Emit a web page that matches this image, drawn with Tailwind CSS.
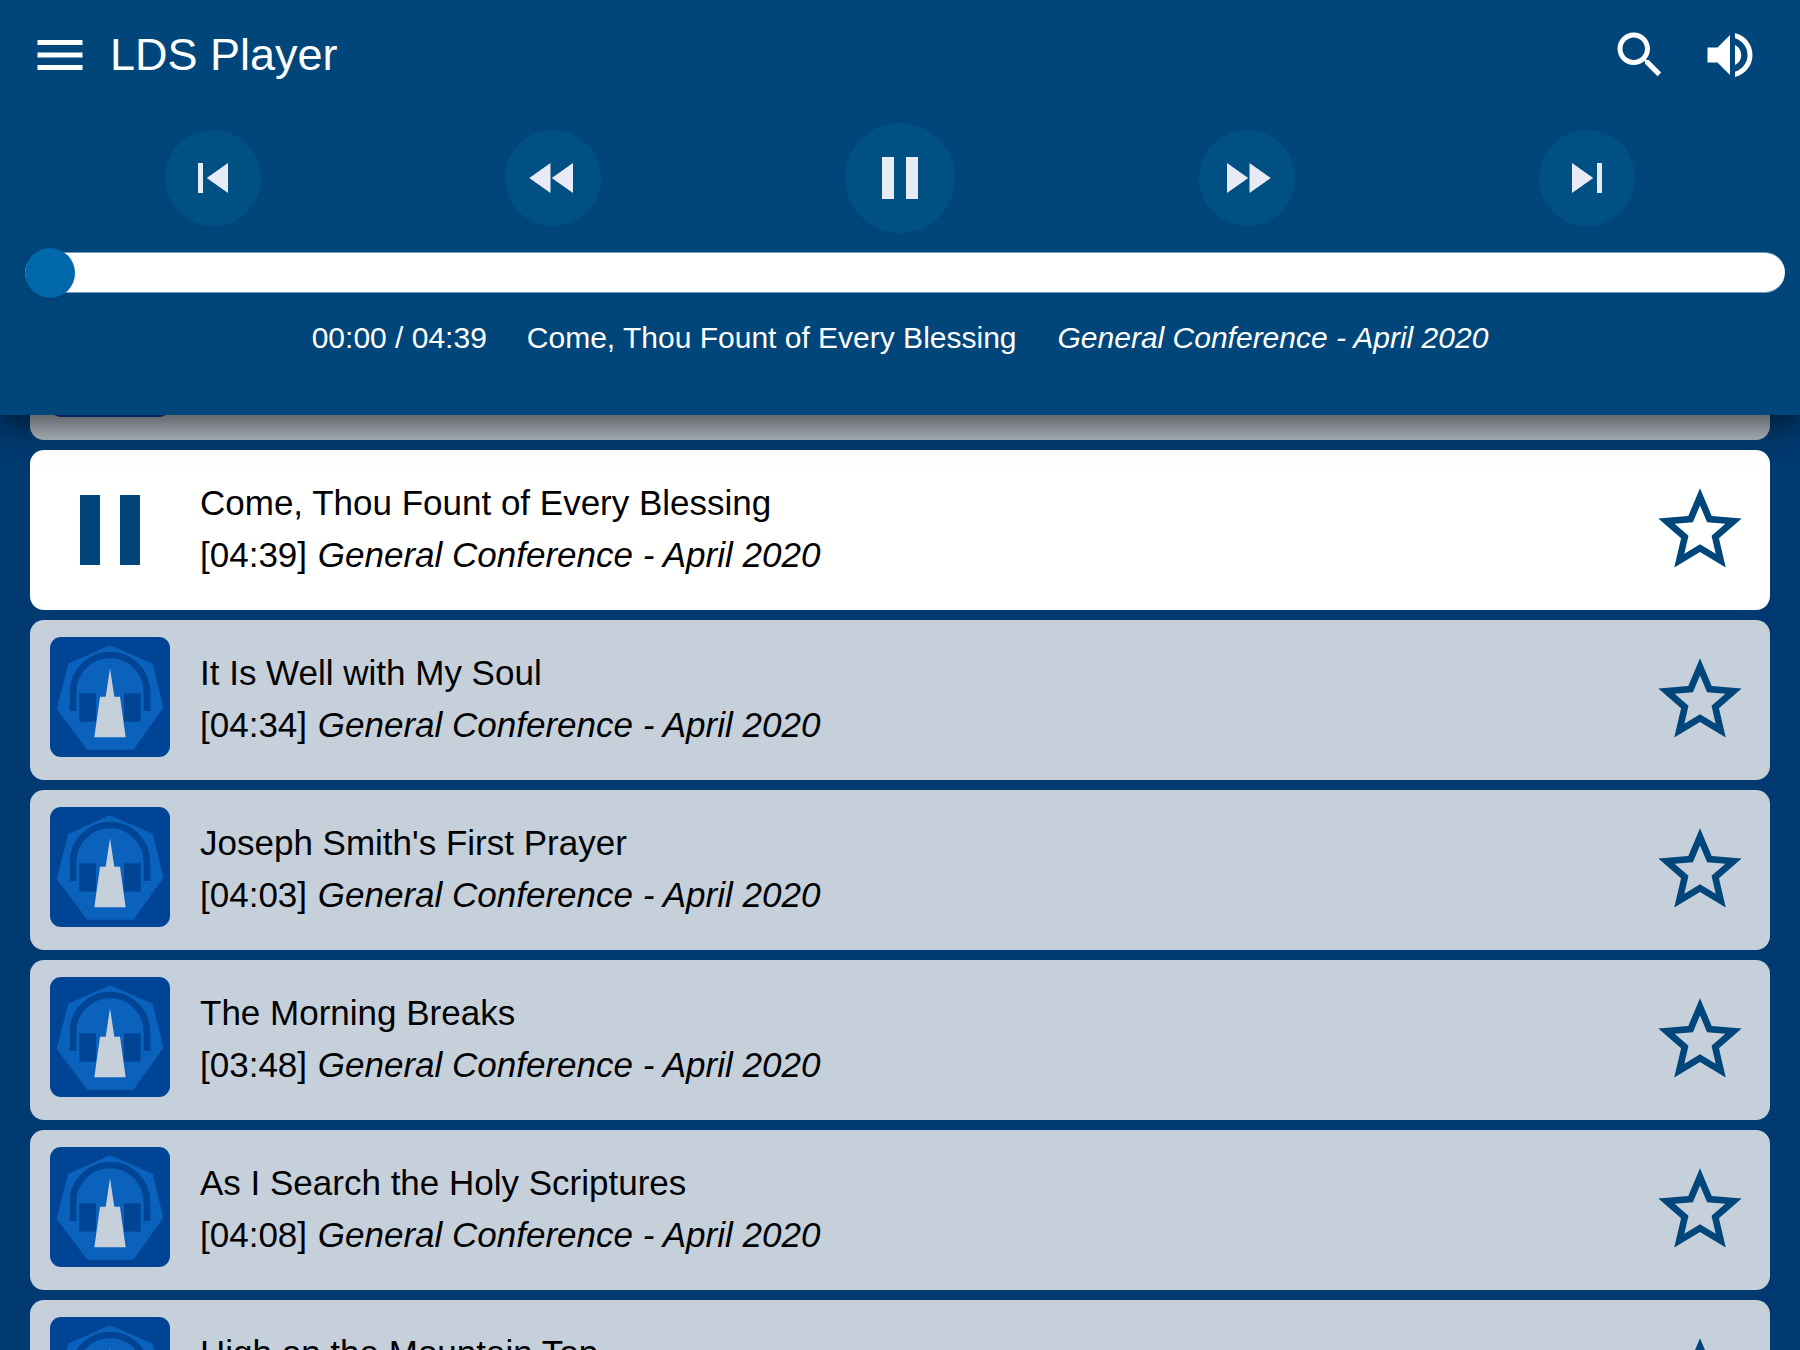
<!DOCTYPE html>
<html lang="en">
<head>
    <meta charset="UTF-8">
    <title>LDS Player</title>
    <script src="https://cdn.jsdelivr.net/npm/@tailwindcss/browser@4"></script>
</head>
<body class="relative h-[1350px] overflow-hidden bg-[#003a70] font-['Liberation_Sans',Arial,sans-serif] text-black">
    <!-- Shared icons -->
    <svg class="hidden">
        <symbol id="star" viewBox="0 0 24 24"><path d="M22 9.24l-7.19-.62L12 2 9.19 8.63 2 9.24l5.46 4.73L5.82 21 12 17.27 18.18 21l-1.63-7.03L22 9.24zM12 15.4l-3.76 2.27 1-4.28-3.32-2.88 4.38-.38L12 6.1l1.71 4.04 4.38.38-3.32 2.88 1 4.28L12 15.4z"/></symbol>
        <symbol id="logo" viewBox="0 0 360 360">
            <polygon fill="#0b62bd" points="180,25 308,80 340,212 250,338 112,338 20,215 55,80"/>
            <path d="M69 222V165A111 111 0 0 1 291 165V222" fill="none" stroke="#004595" stroke-width="20"/>
            <rect x="88" y="169" width="50" height="85" fill="#004595"/>
            <rect x="222" y="169" width="50" height="85" fill="#004595"/>
            <polygon fill="#c5d0db" points="180,94 193,179 210,179 227,301 133,301 150,179 167,179"/>
        </symbol>
    </svg>

    <!-- Player header -->
    <header class="absolute top-0 left-0 z-10 h-[415px] w-full bg-[#00467a] text-white shadow-[0_12px_26px_rgba(0,0,0,0.5)]">
        <div class="flex h-[110px] items-start pt-[25px] pl-[30px] pr-[40px]">
            <svg class="size-[60px] fill-white" viewBox="0 0 24 24"><path d="M3 18h18v-2H3v2zm0-5h18v-2H3v2zm0-7v2h18V6H3z"/></svg>
            <h1 class="ml-[20px] flex-1 text-[45px] leading-[60px]">LDS Player</h1>
            <svg class="size-[60px] fill-white" viewBox="0 0 24 24"><path d="M15.5 14h-.79l-.28-.27C15.41 12.59 16 11.11 16 9.5 16 5.91 13.09 3 9.5 3S3 5.91 3 9.5 5.91 16 9.5 16c1.61 0 3.09-.59 4.23-1.57l.27.28v.79l5 4.99L20.49 19l-4.99-5zm-6 0C7.01 14 5 11.99 5 9.5S7.01 5 9.5 5 14 7.01 14 9.5 11.99 14 9.5 14z"/></svg>
            <svg class="ml-[30px] size-[60px] fill-white" viewBox="0 0 24 24"><path d="M3 9v6h4l5 5V4L7 9H3zm13.5 3c0-1.77-1.02-3.29-2.5-4.03v8.05c1.48-.73 2.5-2.25 2.5-4.02zM14 3.23v2.06c2.89.86 5 3.54 5 6.71s-2.11 5.85-5 6.71v2.06c4.01-.91 7-4.49 7-8.77s-2.99-7.86-7-8.77z"/></svg>
        </div>

        <!-- Transport controls -->
        <div class="flex h-[142px] items-center justify-center gap-[244px] pb-[6px]">
            <button class="flex size-[96px] items-center justify-center rounded-full bg-[#005083]">
                <svg class="size-[60px] fill-[#e8eaf6]" viewBox="0 0 24 24"><path d="M6 6h2v12H6zm3.5 6l8.5 6V6z"/></svg>
            </button>
            <button class="flex size-[96px] items-center justify-center rounded-full bg-[#005083]">
                <svg class="size-[60px] fill-[#e8eaf6]" viewBox="0 0 24 24"><path d="M11 18V6l-8.5 6 8.5 6zm.5-6l8.5 6V6l-8.5 6z"/></svg>
            </button>
            <button class="flex size-[110px] items-center justify-center rounded-full bg-[#005083]">
                <svg class="size-[72px] fill-[#e8eaf6]" viewBox="0 0 24 24"><path d="M6 19h4V5H6v14zm8-14v14h4V5h-4z"/></svg>
            </button>
            <button class="flex size-[96px] items-center justify-center rounded-full bg-[#005083]">
                <svg class="size-[60px] fill-[#e8eaf6]" viewBox="0 0 24 24"><path d="M4 18l8.5-6L4 6v12zm9-12v12l8.5-6L13 6z"/></svg>
            </button>
            <button class="flex size-[96px] items-center justify-center rounded-full bg-[#005083]">
                <svg class="size-[60px] fill-[#e8eaf6]" viewBox="0 0 24 24"><path d="M6 18l8.5-6L6 6v12zM16 6v12h2V6h-2z"/></svg>
            </button>
        </div>

        <!-- Progress slider -->
        <div class="relative ml-[25px] mr-[15px] h-[41px] rounded-full border-y border-[#6f9cbd] bg-white">
            <div class="absolute top-[-5px] left-0 size-[50px] rounded-full bg-[#0068aa] shadow-sm"></div>
        </div>

        <!-- Now playing -->
        <div class="mt-[25px] flex justify-center gap-[40px] text-[30px] leading-[40px]">
            <span>00:00 / 04:39</span>
            <span>Come, Thou Fount of Every Blessing</span>
            <span class="ml-px italic">General Conference - April 2020</span>
        </div>
    </header>

    <!-- Track list -->
    <main class="flex flex-col gap-[10px] px-[30px] pt-[280px]">
        <div class="flex h-[160px] shrink-0 rounded-[14px] bg-[#adb5bd] pt-[17px] pl-[20px]">
            <svg class="size-[120px] rounded-[11px] bg-[#004595]"><use href="#logo"/></svg>
        </div>

        <div class="flex h-[160px] shrink-0 items-center rounded-[14px] bg-white pr-[20px] pl-[20px]">
            <svg class="size-[120px] fill-[#00467a]" viewBox="0 0 24 24"><path d="M6 19h4V5H6v14zm8-14v14h4V5h-4z"/></svg>
            <div class="ml-[30px] flex-1 pb-[2px] text-[35px] leading-[52px]">
                <p>Come, Thou Fount of Every Blessing</p>
                <p>[04:39] <em class="ml-px">General Conference - April 2020</em></p>
            </div>
            <svg class="size-[100px] fill-[#00467a]"><use href="#star"/></svg>
        </div>

        <div class="flex h-[160px] shrink-0 items-center rounded-[14px] bg-[#c5d0db] pr-[20px] pl-[20px]">
            <svg class="mb-[6px] size-[120px] rounded-[11px] bg-[#004595]"><use href="#logo"/></svg>
            <div class="ml-[30px] flex-1 pb-[2px] text-[35px] leading-[52px]">
                <p>It Is Well with My Soul</p>
                <p>[04:34] <em class="ml-px">General Conference - April 2020</em></p>
            </div>
            <svg class="size-[100px] fill-[#00467a]"><use href="#star"/></svg>
        </div>

        <div class="flex h-[160px] shrink-0 items-center rounded-[14px] bg-[#c5d0db] pr-[20px] pl-[20px]">
            <svg class="mb-[6px] size-[120px] rounded-[11px] bg-[#004595]"><use href="#logo"/></svg>
            <div class="ml-[30px] flex-1 pb-[2px] text-[35px] leading-[52px]">
                <p>Joseph Smith's First Prayer</p>
                <p>[04:03] <em class="ml-px">General Conference - April 2020</em></p>
            </div>
            <svg class="size-[100px] fill-[#00467a]"><use href="#star"/></svg>
        </div>

        <div class="flex h-[160px] shrink-0 items-center rounded-[14px] bg-[#c5d0db] pr-[20px] pl-[20px]">
            <svg class="mb-[6px] size-[120px] rounded-[11px] bg-[#004595]"><use href="#logo"/></svg>
            <div class="ml-[30px] flex-1 pb-[2px] text-[35px] leading-[52px]">
                <p>The Morning Breaks</p>
                <p>[03:48] <em class="ml-px">General Conference - April 2020</em></p>
            </div>
            <svg class="size-[100px] fill-[#00467a]"><use href="#star"/></svg>
        </div>

        <div class="flex h-[160px] shrink-0 items-center rounded-[14px] bg-[#c5d0db] pr-[20px] pl-[20px]">
            <svg class="mb-[6px] size-[120px] rounded-[11px] bg-[#004595]"><use href="#logo"/></svg>
            <div class="ml-[30px] flex-1 pb-[2px] text-[35px] leading-[52px]">
                <p>As I Search the Holy Scriptures</p>
                <p>[04:08] <em class="ml-px">General Conference - April 2020</em></p>
            </div>
            <svg class="size-[100px] fill-[#00467a]"><use href="#star"/></svg>
        </div>

        <div class="flex h-[160px] shrink-0 items-center rounded-[14px] bg-[#c5d0db] pr-[20px] pl-[20px]">
            <svg class="mb-[6px] size-[120px] rounded-[11px] bg-[#004595]"><use href="#logo"/></svg>
            <div class="ml-[30px] flex-1 pb-[2px] text-[35px] leading-[52px]">
                <p>High on the Mountain Top</p>
                <p>[03:21] <em class="ml-px">General Conference - April 2020</em></p>
            </div>
            <svg class="size-[100px] fill-[#00467a]"><use href="#star"/></svg>
        </div>
    </main>
</body>
</html>
